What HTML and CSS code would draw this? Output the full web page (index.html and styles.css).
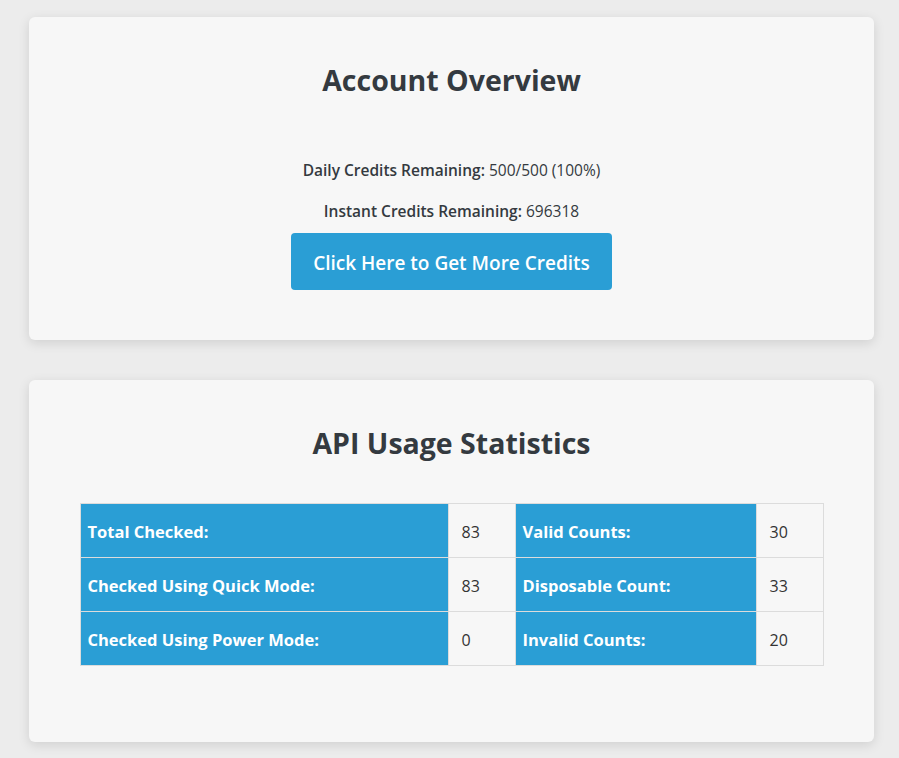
FILE: index.html
```html
<!DOCTYPE html>
<html lang="en">
<head>
<meta charset="utf-8">
<title>Account Overview</title>
<link rel="stylesheet" href="styles.css">
</head>
<body>
<main class="page">
  <section class="card card-account">
    <h2 class="card-title">Account Overview</h2>
    <p class="credit-line credit-daily"><strong>Daily Credits Remaining:</strong> 500/500 (100%)</p>
    <p class="credit-line credit-instant"><strong>Instant Credits Remaining:</strong> 696318</p>
    <a class="btn-credits" href="#">Click Here to Get More Credits</a>
  </section>

  <section class="card card-stats">
    <h2 class="card-title">API Usage Statistics</h2>
    <table class="stats-table">
      <colgroup>
        <col class="col-label-wide">
        <col class="col-value">
        <col class="col-label">
        <col class="col-value">
      </colgroup>
      <tbody>
        <tr>
          <th>Total Checked:</th>
          <td>83</td>
          <th>Valid Counts:</th>
          <td>30</td>
        </tr>
        <tr>
          <th>Checked Using Quick Mode:</th>
          <td>83</td>
          <th>Disposable Count:</th>
          <td>33</td>
        </tr>
        <tr>
          <th>Checked Using Power Mode:</th>
          <td>0</td>
          <th>Invalid Counts:</th>
          <td>20</td>
        </tr>
      </tbody>
    </table>
  </section>
</main>
</body>
</html>
```

FILE: styles.css
```css
* {
  box-sizing: border-box;
}

html, body {
  margin: 0;
  padding: 0;
}

body {
  background: #ececec;
  font-family: "Open Sans", "Noto Sans", "Liberation Sans", sans-serif;
  color: #343a40;
}

.page {
  padding: 17px 25px 17px 29px;
  display: flex;
  flex-direction: column;
  gap: 40px;
}

.card {
  background: #f7f7f7;
  border-radius: 6px;
  box-shadow: 0 3px 12px rgba(0, 0, 0, 0.12);
  display: flex;
  flex-direction: column;
  align-items: center;
  text-align: center;
}

.card-account {
  padding: 44px 51px 50px;
}

.card-stats {
  padding: 44px 51px 76px;
}

.card-title {
  margin: 0;
  font-size: 28.5px;
  line-height: 38px;
  font-weight: 700;
  color: #343a40;
}

.credit-line {
  margin: 0;
  font-size: 15.5px;
  line-height: 21px;
  color: #343a40;
}

.credit-line strong {
  font-weight: 600;
}

.credit-daily {
  margin-top: 61px;
}

.credit-instant {
  margin-top: 20px;
}

.btn-credits {
  margin-top: 11px;
  display: inline-block;
  background: #2a9ed5;
  color: #ffffff;
  text-decoration: none;
  font-size: 19px;
  font-weight: 600;
  line-height: 28px;
  padding: 16px 22px 13px;
  border-radius: 4px;
}

.stats-table {
  margin-top: 41px;
  width: 743px;
  border-collapse: collapse;
  table-layout: fixed;
  font-size: 16px;
}

.col-label-wide {
  width: 368px;
}

.col-value {
  width: 67px;
}

.col-label {
  width: 241px;
}

.stats-table th,
.stats-table td {
  height: 54px;
  border: 1px solid #dcdcdc;
  text-align: left;
  vertical-align: middle;
}

.stats-table th {
  background: #2a9ed5;
  color: #ffffff;
  font-weight: 700;
  font-size: 16.5px;
  padding: 2px 7px 0;
}

.stats-table td {
  padding: 2px 13px 0;
  color: #333333;
  font-weight: 400;
}
```
